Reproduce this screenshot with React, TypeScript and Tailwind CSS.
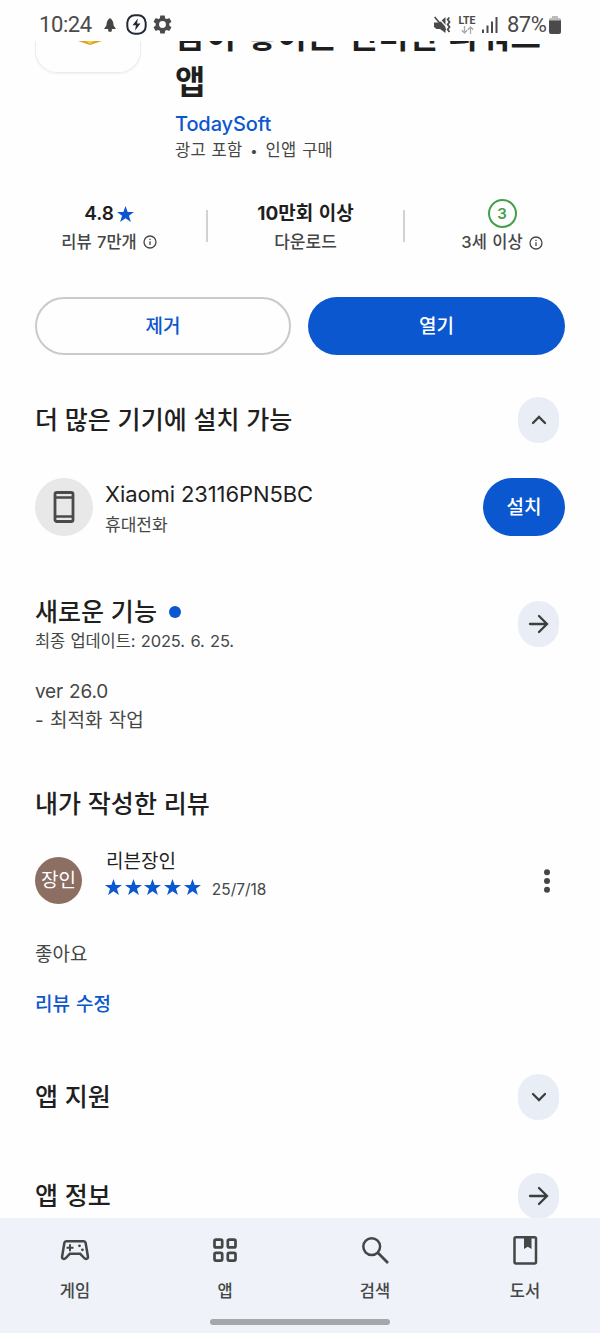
import type { ReactNode } from "react";

const STAR_PATH =
  "M12 1.2l2.700 7.400h7.900l-6.300 4.700 2.400 7.700-6.700-4.700-6.700 4.700 2.400-7.700L1.400 8.600h7.900z";

function Star({ className }: { className: string }) {
  return (
    <svg viewBox="1.400 1.200 21.200 19.800" className={className} fill="#0b57d0">
      <path d={STAR_PATH} />
    </svg>
  );
}

function InfoIcon() {
  return (
    <svg viewBox="0 0 14 14" className="size-[14px]" fill="none" stroke="#444746">
      <circle cx="7" cy="7" r="6" strokeWidth="1.300" />
      <path d="M7 6.300v3.800M7 3.700v1.300" strokeWidth="1.300" />
    </svg>
  );
}

function StatusBar() {
  return (
    <div className="flex h-[41px] shrink-0 items-start justify-between bg-[#fefefe] pr-[39px] pl-[39px] text-[#4a4a4a]">
      <div className="flex h-[49px] items-center">
        <span className="w-[53px] font-['Roboto',sans-serif] text-[22px] leading-none tracking-[-0.4px]">
          10:24
        </span>
        <svg viewBox="0 0 12 14" className="ml-3 h-[14px] w-3" fill="#444">
          <path d="M6 0c1.600 1.200 2.900 2.800 3.300 5L9.600 7.500 12 11H7.800v2.200c-.9.800-2.700.8-3.600 0V11H0l2.400-3.500.3-2.500C3.100 2.800 4.400 1.200 6 0z" />
        </svg>
        <svg viewBox="0 0 21 21" className="ml-[10px] size-[21px]" fill="none">
          <rect x="1.300" y="1.300" width="18.400" height="18.400" rx="7.500" stroke="#222b35" strokeWidth="2" />
          <path d="M11.800 4.500L6.500 11.300h3.400l-.8 5.200 5.400-7h-3.400z" fill="#222b35" />
        </svg>
        <svg viewBox="2 2 20 20" className="ml-[6px] size-[19px]" fill="#4a4a4a">
          <path d="M19.140 12.940c.04-.3.060-.610.060-.940 0-.320-.020-.640-.070-.940l2.030-1.580a.49.49 0 0 0 .12-.610l-1.920-3.320a.488.488 0 0 0-.59-.220l-2.390.960c-.5-.380-1.030-.700-1.620-.940l-.36-2.540a.484.484 0 0 0-.48-.410h-3.840c-.240 0-.430.170-.470.410l-.360 2.540c-.590.240-1.130.570-1.620.940l-2.390-.960c-.220-.080-.470 0-.590.220L2.740 8.870c-.120.210-.080.470.120.610l2.030 1.580c-.050.300-.090.630-.090.940s.020.640.070.940l-2.030 1.580a.49.49 0 0 0-.12.610l1.920 3.320c.120.220.370.290.590.220l2.390-.960c.500.380 1.030.700 1.620.940l.360 2.540c.050.240.240.410.480.410h3.840c.240 0 .440-.170.470-.410l.360-2.540c.590-.240 1.130-.560 1.620-.940l2.390.960c.220.080.470 0 .590-.220l1.920-3.320c.120-.220.070-.470-.120-.610l-2.010-1.580zM12 15.600A3.600 3.600 0 1 1 12 8.400a3.600 3.600 0 0 1 0 7.200z" />
        </svg>
      </div>
      <div className="flex h-[49px] items-center">
        <svg viewBox="0 0 17 18" className="h-[18px] w-[17px]" fill="#4a4a4a">
          <path d="M0 6.500h5.500L11.500 1v16L6 13H2.500L0 11z" />
          <path d="M3 0l10 11.500" stroke="#fefefe" strokeWidth="1.200" />
          <path d="M.6 1l11 13" stroke="#4a4a4a" strokeWidth="1.700" />
          <path d="M15.300 1.500l-1.600 2 1.800 2.500-1.800 2.500 1.800 2.500-1.800 2.500 1.800 2.500" stroke="#4a4a4a" strokeWidth="1.800" fill="none" />
        </svg>
        <div className="ml-[7px] flex w-[18px] flex-col items-center">
          <span className="font-['Roboto',sans-serif] text-[10.5px] leading-[10px] font-bold">
            LTE
          </span>
          <svg viewBox="0 0 13 8" className="h-2 w-[13px]" fill="none" stroke="#aaa" strokeWidth="1.300">
            <path d="M3.500 0v7M.8 4.300l2.700 2.700 2.700-2.700M9.500 8V1M6.800 3.700L9.500 1l2.700 2.700" />
          </svg>
        </div>
        <svg viewBox="0 0 16 16" className="ml-[6px] size-4" fill="#4a4a4a">
          <rect x="0" y="12.500" width="2" height="3.500" />
          <rect x="4.500" y="8.500" width="2" height="7.500" />
          <rect x="9" y="4.500" width="2" height="11.500" />
          <rect x="13.500" y="0" width="2" height="16" />
        </svg>
        <span className="ml-[9px] w-[41px] font-['Roboto',sans-serif] text-[22px] leading-none tracking-[-0.5px]">
          87%
        </span>
        <svg viewBox="0 0 12 18" className="ml-[1px] h-[18px] w-3">
          <path d="M3 0h6v2h1.500a1.500 1.500 0 0 1 1.500 1.500V6H0V3.500A1.500 1.500 0 0 1 1.500 2H3z" fill="#bbb" />
          <path d="M0 4.500h12V16a2 2 0 0 1-2 2H2a2 2 0 0 1-2-2z" fill="#4a4a4a" />
        </svg>
      </div>
    </div>
  );
}

function RoundButton({ children }: { children: ReactNode }) {
  return (
    <button className="flex h-[46px] w-[41px] shrink-0 items-center justify-center rounded-full bg-[#e8edf6]">
      <svg
        viewBox="0 0 24 24"
        className="size-6"
        fill="none"
        stroke="#3c3f3e"
        strokeWidth="2.300"
        strokeLinecap="round"
      >
        {children}
      </svg>
    </button>
  );
}

const ARROW = <path d="M3 12h17M12 4l8 8-8 8" />;

function Heading({ children }: { children: ReactNode }) {
  return (
    <h2 className="pt-[1px] text-[25px] leading-[29px] font-medium tracking-[0.050px] whitespace-nowrap text-[#1f1f1f]">
      {children}
    </h2>
  );
}

const navItems = [
  {
    label: "게임",
    icon: (
      <svg viewBox="0 0 30 30" className="size-[30px]" fill="none" stroke="#444746" strokeWidth="2.500">
        <path d="M6.300 6.200h17.400q1.600 0 1.900 1.600l2.300 13.700q.4 2.400-1.800 2.400-1.100 0-1.900-.9l-4-4.200H9.800l-4 4.200q-.8.900-1.900.9-2.200 0-1.800-2.400L4.400 7.800q.3-1.600 1.900-1.600z" />
        <path d="M10 9.300v7M6.500 12.800h7" strokeWidth="2" />
        <circle cx="19.500" cy="10.800" r="1.400" fill="#444746" stroke="none" />
        <circle cx="22.400" cy="14.800" r="1.400" fill="#444746" stroke="none" />
      </svg>
    ),
  },
  {
    label: "앱",
    icon: (
      <svg viewBox="0 0 30 30" className="size-[30px]" fill="none" stroke="#444746" strokeWidth="2.700">
        <rect x="4.500" y="4.700" width="7.700" height="7.700" rx="1.500" />
        <rect x="17.800" y="4.700" width="7.700" height="7.700" rx="1.500" />
        <rect x="4.500" y="17.900" width="7.700" height="7.700" rx="1.500" />
        <rect x="17.800" y="17.900" width="7.700" height="7.700" rx="1.500" />
      </svg>
    ),
  },
  {
    label: "검색",
    icon: (
      <svg viewBox="0 0 30 30" className="size-[30px]" fill="none" stroke="#444746" strokeWidth="2.500">
        <circle cx="11.700" cy="11.600" r="8.400" />
        <path d="M17.600 17.500L28 28" strokeWidth="2.700" />
      </svg>
    ),
  },
  {
    label: "도서",
    icon: (
      <svg viewBox="0 0 30 30" className="size-[30px]" fill="none" stroke="#444746" strokeWidth="2.500">
        <rect x="4.500" y="2.200" width="21.500" height="26.300" rx="1.500" />
        <path d="M14 2h7.500v12l-3.750-2.200L14 14z" fill="#444746" stroke="none" />
      </svg>
    ),
  },
];

export default function App() {
  return (
    <main className="flex h-[1333px] w-[600px] flex-col overflow-hidden bg-[#fefefe] font-['Inter','Noto_Sans_CJK_KR',sans-serif] text-[#444746]">
      <StatusBar />

      <div className="h-[1177px] shrink-0 overflow-hidden px-[35px]">
        <header className="flex h-[156px] items-start">
          <div className="flex h-8 w-[106px] shrink-0 justify-center rounded-b-[22px] border border-t-0 border-[#ececec] shadow-[0_1px_2px_rgba(0,0,0,0.06)]">
            <svg viewBox="0 0 24 4" className="ml-1 h-1 w-6">
              <path d="M0 0h24L12 4z" fill="#e0a020" />
              <path d="M8 0h8l-4 3z" fill="#f6cc55" />
            </svg>
          </div>
          <div className="-mt-[28px] ml-[34px] whitespace-nowrap">
            <h1 className="text-[33px] leading-[46px] font-bold tracking-[0.3px] text-[#1f1f1f] [word-spacing:1.500px]">
              꿈이 쌓이는 신비한 파워드
              <br />앱
            </h1>
            <p className="mt-[6px] text-[20px] leading-[26px] font-medium tracking-[-0.1px] text-[#0b57d0]">
              TodaySoft
            </p>
            <p className="pt-[1px] text-[16.5px] leading-[25px] tracking-[0.2px] [word-spacing:1px]">
              광고 포함 <span className="mx-[2px] text-[13px]">•</span> 인앱 구매
            </p>
          </div>
        </header>

        <section className="flex h-[58px] items-center text-center whitespace-nowrap">
          <div className="w-[148px] shrink-0">
            <div className="flex h-[28px] items-center justify-center pt-[6px] text-[19px] font-semibold text-[#1f1f1f]">
              4.8
              <Star className="ml-[3px] h-4 w-[17px]" />
            </div>
            <div className="flex h-[30px] items-center justify-center gap-[6px] pt-[4px] text-[16.5px] font-medium [word-spacing:1px]">
              <span>리뷰 7만개</span> <InfoIcon />
            </div>
          </div>
          <div className="ml-[23px] h-8 w-[2px] shrink-0 bg-[#d2d2d2]" />
          <div className="w-[195px] shrink-0">
            <div className="h-[28px] pt-[3px] text-[19px] leading-[28px] font-bold [word-spacing:1px] text-[#1f1f1f]">
              10만회 이상
            </div>
            <div className="h-[30px] pt-[2px] text-[17px] leading-[30px] font-medium">다운로드</div>
          </div>
          <div className="h-8 w-[2px] shrink-0 bg-[#d2d2d2]" />
          <div className="ml-[34px] w-[126px] shrink-0">
            <div className="relative top-[2px] mx-auto flex size-[29px] items-center justify-center rounded-full border-2 border-[#43a047] text-[15px] leading-none font-semibold text-[#43a047]">
              3
            </div>
            <div className="flex h-[29px] items-center justify-center gap-[6px] pt-[4px] text-[16.5px] font-medium [word-spacing:1px]">
              <span>3세 이상</span> <InfoIcon />
            </div>
          </div>
        </section>

        <div className="mt-[42px] flex gap-[17px] text-[19px] font-medium">
          <button className="h-[58px] w-[256px] rounded-full border-[2px] border-[#c9cbca] pt-[2px] text-[#0b57d0]">
            제거
          </button>
          <button className="h-[58px] w-[257px] rounded-full bg-[#0b57d0] pt-[3px] text-white">열기</button>
        </div>

        <section className="mt-[42px]">
          <div className="flex h-[46px] items-center justify-between pr-[6px]">
            <Heading>더 많은 기기에 설치 가능</Heading>
            <RoundButton>
              <path d="M6 15l6-6 6 6" />
            </RoundButton>
          </div>
          <div className="mt-[35px] flex h-[58px] items-center">
            <div className="flex size-[58px] items-center justify-center rounded-full bg-[#e8e8e8]">
              <svg viewBox="0 0 22 32" className="h-8 w-[22px]" fill="none" stroke="#4a4a4a" strokeWidth="2.800">
                <rect x="2" y="1.500" width="18" height="29" rx="1.800" />
                <path d="M2 6.500h18M2 25.500h18" strokeWidth="2.400" />
              </svg>
            </div>
            <div className="ml-3 flex-1 pt-[3px]">
              <p className="text-[22px] leading-[32px] tracking-[-0.1px] text-[#1f1f1f]">Xiaomi 23116PN5BC</p>
              <p className="pt-[1px] text-[17px] leading-[28px]">휴대전화</p>
            </div>
            <button className="h-[58px] w-[82px] rounded-full bg-[#0b57d0] pt-[3px] text-[19px] font-medium text-white">
              설치
            </button>
          </div>
        </section>

        <section className="mt-[61px] h-[136px]">
          <div className="flex h-[56px] items-center justify-between pr-[6px]">
            <div className="pt-[2px]">
              <div className="flex items-center gap-3">
                <Heading>새로운 기능</Heading>
                <span className="size-3 rounded-full bg-[#0b57d0]" />
              </div>
              <p className="text-[16.5px] leading-[28px] tracking-[-0.150px] [word-spacing:1px]">
                최종 업데이트: 2025. 6. 25.
              </p>
            </div>
            <div className="-mt-[3px]">
              <RoundButton>{ARROW}</RoundButton>
            </div>
          </div>
          <p className="mt-[24px] text-[19px] leading-[29px] [word-spacing:1px]">
            <span className="tracking-[-0.2px]">ver 26.0</span>
            <br />- 최적화 작업
          </p>
        </section>

        <section className="mt-[56px]">
          <Heading>내가 작성한 리뷰</Heading>
          <div className="mt-[27px] flex h-[68px] items-center">
            <div className="flex size-[47px] shrink-0 items-center justify-center rounded-full bg-[#8d6e63] pt-[3px] text-[19px] whitespace-nowrap text-white">
              장인
            </div>
            <div className="ml-[23px] flex-1 pb-[12px]">
              <p className="pl-[1px] text-[19px] leading-[28px] text-[#1f1f1f]">리븐장인</p>
              <div className="flex h-[24px] items-center">
                <div className="flex gap-[2.700px] pb-[3px]">
                  {[0, 1, 2, 3, 4].map((i) => (
                    <Star key={i} className="h-4 w-[17px]" />
                  ))}
                </div>
                <span className="ml-[11px] pt-1 text-[15.5px]">25/7/18</span>
              </div>
            </div>
            <svg viewBox="0 0 6 24" className="mt-[2px] mr-[15px] h-6 w-[6px]" fill="#444746">
              <circle cx="3" cy="3.300" r="3" />
              <circle cx="3" cy="12" r="3" />
              <circle cx="3" cy="20.700" r="3" />
            </svg>
          </div>
          <p className="mt-[27px] text-[19px] leading-[28px]">좋아요</p>
          <p className="mt-[22px] text-[19px] leading-[28px] font-medium [word-spacing:1px] text-[#0b57d0]">
            리뷰 수정
          </p>
        </section>

        <section className="mt-[55px] flex h-[46px] items-center justify-between pr-[6px]">
          <Heading>앱 지원</Heading>
          <RoundButton>
            <path d="M6 9l6 6 6-6" />
          </RoundButton>
        </section>
        <section className="mt-[53px] flex h-[46px] items-center justify-between pr-[6px]">
          <Heading>앱 정보</Heading>
          <RoundButton>{ARROW}</RoundButton>
        </section>
      </div>

      <nav className="flex h-[115px] shrink-0 flex-col items-center bg-[#eff2f8]">
        <div className="flex w-full">
          {navItems.map((item) => (
            <button key={item.label} className="flex flex-1 flex-col items-center pt-[17px]">
              {item.icon}
              <span className="mt-[13px] text-[16.5px] leading-[26px] font-medium">{item.label}</span>
            </button>
          ))}
        </div>
        <div className="mt-[15px] h-[6px] w-[180px] rounded-full bg-[#a5a7ab]" />
      </nav>
    </main>
  );
}
